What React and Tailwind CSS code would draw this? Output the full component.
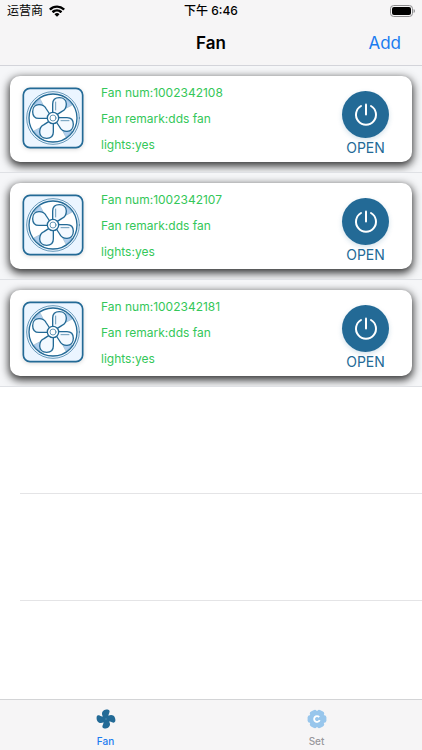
import { useState } from 'react';

const fans = [
  { num: '1002342108', remark: 'dds fan', lights: 'yes' },
  { num: '1002342107', remark: 'dds fan', lights: 'yes' },
  { num: '1002342181', remark: 'dds fan', lights: 'yes' },
];

const WifiIcon = () => (
  <svg className="w-4 h-3" viewBox="0 0 16 12" fill="currentColor" aria-hidden="true">
    <path d="M8 .4C5 .4 2.3 1.5.3 3.4a.4.4 0 0 0 0 .6l1.1 1.2c.2.2.4.2.6 0A8.7 8.7 0 0 1 8 2.8c2.3 0 4.4.9 6 2.4.2.2.4.2.6 0l1.1-1.2a.4.4 0 0 0 0-.6A11.2 11.2 0 0 0 8 .4Z" />
    <path d="M8 4.2c-1.9 0-3.7.7-5 1.9a.4.4 0 0 0 0 .6l1.2 1.2c.2.2.4.2.6 0a4.8 4.8 0 0 1 6.4 0c.2.2.4.2.6 0L13 6.7a.4.4 0 0 0 0-.6 7.4 7.4 0 0 0-5-1.9Z" />
    <path d="M8 8c-.9 0-1.7.3-2.3.9-.2.2-.2.4 0 .6l2 2c.2.2.4.2.6 0l2-2c.2-.2.2-.4 0-.6C9.700 8.3 8.9 8 8 8Z" />
  </svg>
);

const BatteryIcon = () => (
  <svg className="w-[25px] h-3" viewBox="0 0 25 12" aria-hidden="true">
    <rect x="0.5" y="0.5" width="22" height="11" rx="3.2" fill="none" stroke="#8c8c8e" />
    <rect x="2" y="2" width="19" height="8" rx="2" fill="#000" />
    <path d="M23.6 4v4c.8-.3 1.3-1.1 1.3-2s-.5-1.7-1.3-2Z" fill="#8c8c8e" />
  </svg>
);

const BLADE = 'M-1 -15 V-42 C-1 -54 7 -61 19 -61 C32 -61 40 -53 40 -42 C40 -31 36 -24 27 -20 L12 -10 Z';

const FanBoxIcon = () => (
  <svg
    className="w-[62px] h-[62px] shrink-0 drop-shadow-sm"
    viewBox="-93 -93 186 186"
    fill="none"
    stroke="#236a96"
    strokeLinejoin="round"
    strokeLinecap="round"
    aria-hidden="true"
  >
    <rect x="-89" y="-89" width="178" height="178" rx="20" fill="#ebf5ff" strokeWidth="5" />
    <circle r="79" strokeWidth="2" />
    <circle r="72" fill="#fff" strokeWidth="4" />
    {[0, 90, 180, 270].map((angle) => (
      <path
        key={angle}
        transform={`rotate(${angle})`}
        d="M20 -20 L40 -57 A70 70 0 0 1 57 -40 Z"
        fill="#b1cfee"
        strokeWidth="1"
      />
    ))}
    {[0, 90, 180, 270].map((angle) => (
      <path key={angle} transform={`rotate(${angle})`} d={BLADE} fill="#f3f9ff" strokeWidth="4" />
    ))}
    <path d="M8 -24 V-48 M24 8 H48" strokeWidth="2" />
    <circle r="17" fill="#fff" strokeWidth="4" />
    <circle r="9" fill="#fff" strokeWidth="2" />
  </svg>
);

const PowerIcon = () => (
  <svg
    className="w-6 h-6"
    viewBox="0 0 24 24"
    fill="none"
    stroke="currentColor"
    strokeWidth="2"
    strokeLinecap="round"
    aria-hidden="true"
  >
    <path d="M12 1.5v10" />
    <path d="M7 3a10 10 0 1 0 10 0" />
  </svg>
);

const FanTabIcon = () => (
  <svg className="w-5 h-5" viewBox="-10 -10 20 20" fill="#236a96" aria-hidden="true">
    {[0, 90, 180, 270].map((angle) => (
      <path
        key={angle}
        transform={`rotate(${angle})`}
        d="M-2 1 C-1.5 -1.5 -4 -2.500 -4 -5.2 C-4 -8.2 -1 -9.6 1.6 -9.4 C3.800 -9.2 4 -7.4 3.2 -6 C2.2 -4.4 2.6 -3 3 -1 L0 2 Z"
      />
    ))}
    <circle r="3" />
    <circle r="0.8" fill="#4f89ad" />
  </svg>
);

const SetTabIcon = () => (
  <svg className="w-5 h-5" viewBox="-10 -10 20 20" fill="#98c6ec" aria-hidden="true">
    <circle r="8" />
    {[30, 90, 150, 210, 270, 330].map((angle) => (
      <rect key={angle} x="-3.8" y="-9.4" width="7.6" height="6" rx="2.4" transform={`rotate(${angle})`} />
    ))}
    <path d="M2.2 -1.9 A2.9 2.9 0 1 0 2.7 1.1" fill="none" stroke="#fff" strokeWidth="1.8" />
  </svg>
);

const FanRow = ({ fan }) => {
  const [open, setOpen] = useState(true);

  return (
    <li className="h-[107px] px-2.5 pt-2.5 bg-[#f5f6f8] border-b border-[#dfe1e5] overflow-hidden">
      <div className="h-[86px] flex items-start pl-3 pr-[23px] bg-white rounded-[10px] shadow-[0_3px_9px_1px_rgba(0,0,0,0.8)]">
        <div className="pt-[11px]">
          <FanBoxIcon />
        </div>
        <div className="flex-1 pl-[17px] pt-1 text-xs leading-[26px] text-[#34c759]">
          <p>Fan num:{fan.num}</p>
          <p>Fan remark:{fan.remark}</p>
          <p>lights:{fan.lights}</p>
        </div>
        <button
          type="button"
          onClick={() => setOpen(!open)}
          className="flex flex-col items-center pt-[15px] text-[#236a96]"
        >
          <span className="w-[47px] h-[47px] flex items-center justify-center rounded-full bg-[#236a96] text-white shadow-[0_2px_5px_rgba(35,106,150,0.2)]">
            <PowerIcon />
          </span>
          <span className="text-sm leading-5">{open ? 'OPEN' : 'CLOSE'}</span>
        </button>
      </div>
    </li>
  );
};

const App = () => {
  const [tab, setTab] = useState('fan');

  return (
    <div className="min-h-screen flex flex-col bg-white font-['Inter','Noto_Sans_CJK_SC',sans-serif] text-black">
      <header className="bg-[#f6f5f6] border-b border-[#d3d4da]">
        <div className="h-[22px] px-[7px] grid grid-cols-3 items-center text-xs leading-[22px]">
          <div className="flex items-center gap-1.5">
            <span>运营商</span>
            <WifiIcon />
          </div>
          <span className="text-center font-medium">下午 6:46</span>
          <div className="flex justify-end">
            <BatteryIcon />
          </div>
        </div>
        <div className="h-[43px] px-[21px] grid grid-cols-3 items-center">
          <h1 className="col-start-2 text-center text-[17px] font-semibold">Fan</h1>
          <button type="button" className="justify-self-end text-[17px] text-[#1a7cf0]">
            Add
          </button>
        </div>
      </header>

      <main className="flex-1">
        <ul>
          {fans.map((fan) => (
            <FanRow key={fan.num} fan={fan} />
          ))}
        </ul>
        <div className="ml-5 h-[107px] border-b border-[#e4e4e6]" />
        <div className="ml-5 h-[107px] border-b border-[#e4e4e6]" />
      </main>

      <nav className="h-[51px] grid grid-cols-2 bg-[#f6f5f6] border-t border-[#d3d4d6] text-[10px] font-medium">
        <button
          type="button"
          onClick={() => setTab('fan')}
          className={`flex flex-col items-center gap-1.5 pt-[9px] ${tab === 'fan' ? 'text-[#1a7cf0]' : 'text-[#98989c]'}`}
        >
          <FanTabIcon />
          <span className="leading-3">Fan</span>
        </button>
        <button
          type="button"
          onClick={() => setTab('set')}
          className={`flex flex-col items-center gap-1.5 pt-[9px] ${tab === 'set' ? 'text-[#1a7cf0]' : 'text-[#98989c]'}`}
        >
          <SetTabIcon />
          <span className="leading-3">Set</span>
        </button>
      </nav>
    </div>
  );
};

export default App;
